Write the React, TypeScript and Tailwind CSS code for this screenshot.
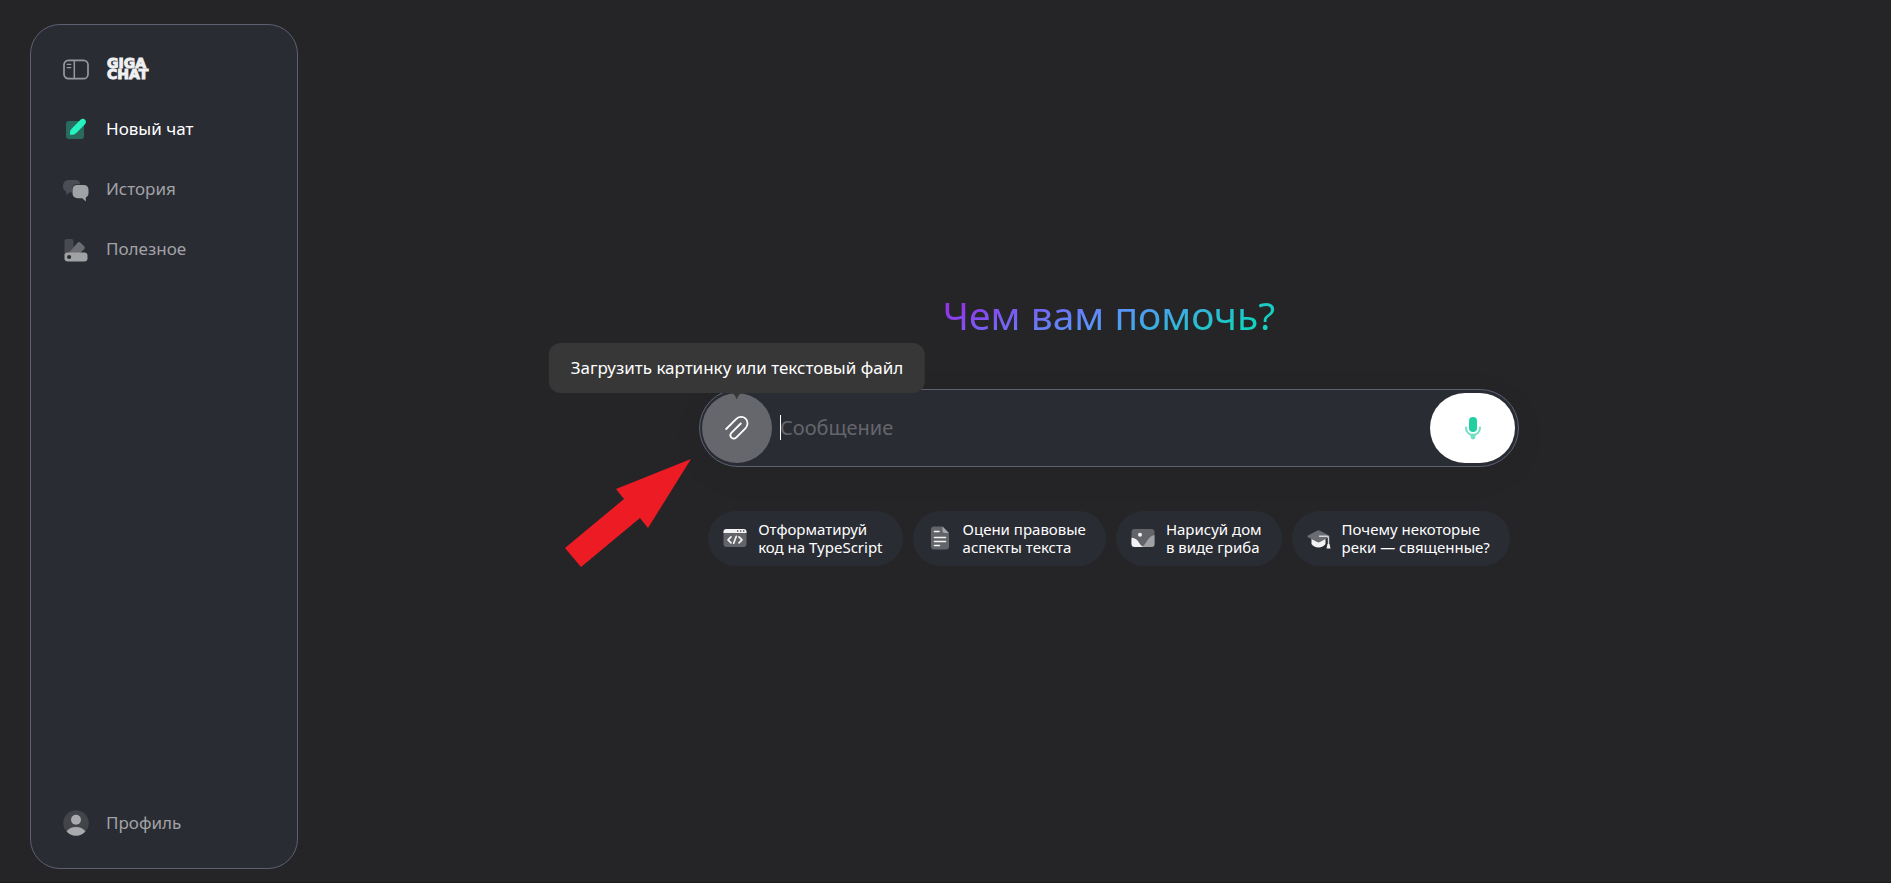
import type { ReactNode } from "react";

const PanelIcon = () => (
  <svg viewBox="0 0 26 26" className="h-[26px] w-[26px]" fill="none" aria-hidden="true">
    <rect x="1" y="4.3" width="24" height="18.4" rx="4.5" stroke="#97989c" strokeWidth="1.7" />
    <path d="M11.3 4.3v18.4" stroke="#97989c" strokeWidth="1.5" />
    <path d="M4.2 8.3h3.6M4.2 11.6h3.6" stroke="#97989c" strokeWidth="1.3" strokeLinecap="round" />
  </svg>
);

const NewChatIcon = () => (
  <svg viewBox="0 0 26 26" className="h-[26px] w-[26px]" aria-hidden="true">
    <rect x="3" y="5" width="18" height="18" rx="3" fill="#2a6b5f" />
    <path
      d="M7 18.8c-.3-2.4.2-4.6 1.8-6.2l8.4-8.5c1.6-1.6 3.5-1.6 4.8-.4 1.3 1.3 1.3 3.2-.3 4.8l-8.4 8.4c-1.5 1.5-3.5 2.1-6.3 1.9z"
      fill="#26f4c0"
    />
  </svg>
);

const HistoryIcon = () => (
  <svg viewBox="0 0 26 26" className="h-[26px] w-[26px]" aria-hidden="true">
    <path
      d="M6 4h6c3.5 0 5.5 2 5.5 5.5V12c0 3-1.5 4.5-5 4.5h-6l-3.2 2.7v-3.4C1.2 14.5 0 13 0 10.5 0 6.5 2 4 6 4z"
      fill="#4b4d54"
    />
    <path
      d="M14.5 8.2h6c3.5 0 5.5 2 5.5 5.4V17c0 2.3-1 4-2.8 4.7v4.2l-3.9-3.3h-4.8c-3.5 0-5.5-2-5.5-5.5v-3.5c0-3.4 2-5.4 5.5-5.4z"
      fill="#2a2c34"
    />
    <path
      d="M14.5 9h6c3.3 0 5 1.8 5 5v3c0 2.2-1 3.6-2.7 4.4v4.1l-3.6-3.3h-4.7c-3.3 0-5-1.9-5-5.2v-3c0-3.2 1.7-5 5-5z"
      fill="#a1a2a6"
    />
  </svg>
);

const UsefulIcon = () => (
  <svg viewBox="0 0 26 26" className="h-[26px] w-[26px]" aria-hidden="true">
    <rect x="1.5" y="3" width="9" height="18" rx="2.2" fill="#484a51" />
    <path d="M4 19 14.3 7c1-1.2 2.2-1.2 3.2-.3l3.5 3.4c1 1 1 2.1.1 3.1L13 21z" fill="#6c6d73" />
    <rect x="1.5" y="16.5" width="23" height="9" rx="3.2" fill="#a1a2a6" />
    <circle cx="6.1" cy="21" r="2.1" fill="#2a2c34" />
  </svg>
);

const ProfileIcon = () => (
  <svg viewBox="0 0 26 26" className="h-[26px] w-[26px]" aria-hidden="true">
    <circle cx="13" cy="13" r="12.8" fill="#42444a" />
    <circle cx="13" cy="9.7" r="5" fill="#a9aaae" />
    <path d="M3.6 21.2c2.2-2.8 5.3-4.3 9.4-4.3s7.2 1.5 9.4 4.3c-2.2 2.8-5.5 4.5-9.4 4.5s-7.2-1.7-9.4-4.5z" fill="#a9aaae" />
  </svg>
);

const ClipIcon = () => (
  <svg viewBox="0 0 24 24" className="h-6 w-6" fill="none" aria-hidden="true">
    <path
      d="M1.2 13 10.8 3.3C13.7.3 18 .3 20.6 2.7c2.7 2.6 2.5 6.8-.2 9.6l-9 9c-1.6 1.6-3.6 1.6-5 .3-1.4-1.4-1.3-3.4.2-5l9.2-9.1"
      stroke="#fff"
      strokeWidth="1.8"
      strokeLinecap="round"
      strokeLinejoin="round"
    />
  </svg>
);

const MicIcon = () => (
  <svg viewBox="0 0 24 24" className="h-6 w-6" fill="none" aria-hidden="true">
    <path d="M5 11.5c0 4.5 3 7.3 7 7.3s7-2.8 7-7.3" stroke="#6fdfc2" strokeWidth="2" strokeLinecap="round" />
    <path d="M9 18h6l-1 4.3c-.6 1.5-3.4 1.5-4 0z" fill="#6fdfc2" />
    <rect x="8" y="1" width="8" height="15" rx="4" fill="#21cfa0" />
  </svg>
);

const CodeIcon = () => (
  <svg viewBox="0 0 24 24" className="h-6 w-6 shrink-0" fill="none" aria-hidden="true">
    <rect x="0.5" y="3" width="23" height="18" rx="3" fill="#636469" />
    <path d="M.5 7V6c0-2 1-3 3-3h17c2 0 3 1 3 3v1z" fill="#f3f3f4" />
    <path d="M14 5h1.3M17 5h1.3M20 5h1.3" stroke="#4d4e54" strokeWidth="1.6" />
    <path d="m8 10.8-3 3 3 3M16 10.8l3 3-3 3M13.3 10.3l-2.6 7" stroke="#f3f3f4" strokeWidth="1.7" strokeLinecap="round" strokeLinejoin="round" />
  </svg>
);

const DocIcon = () => (
  <svg viewBox="0 0 24 24" className="h-6 w-6 shrink-0" fill="none" aria-hidden="true">
    <path d="M6 .5h8.5L21 7.5v13c0 2-1 3-3 3H6c-2 0-3-1-3-3v-17c0-2 1-3 3-3z" fill="#636469" />
    <path d="M14.5.5 21 7h-4c-1.7 0-2.5-.8-2.5-2.5z" fill="#a5a6aa" />
    <path d="M6.5 5.5H11M6.500 11.500h11M6.500 15.500h11M6.500 19.500h5" stroke="#f3f3f4" strokeWidth="1.6" strokeLinecap="round" />
  </svg>
);

const PictureIcon = () => (
  <svg viewBox="0 0 24 24" className="h-6 w-6 shrink-0" aria-hidden="true">
    <rect x="0.5" y="3" width="23" height="18" rx="3" fill="#636469" />
    <path d="M23.5 9v9c0 2-1 3-3 3H11c2-1.5 3.3-3.5 5-6 2-3.3 4.3-5.5 7.5-6z" fill="#a0a1a5" />
    <path d="M.5 11.7c4 .3 5.8 2 7.3 4.5 1 1.6 2 3.3 4.7 4.800h-9c-2 0-3-1-3-3z" fill="#f3f3f4" />
    <circle cx="9" cy="8.7" r="2" fill="#f3f3f4" />
  </svg>
);

const CapIcon = () => (
  <svg viewBox="0 0 24 24" className="h-6 w-6 shrink-0" fill="none" aria-hidden="true">
    <path d="M4.5 12v6c1.5 2.3 4 3.5 7 3.5s5.500-1.200 7-3.500v-6z" fill="#f3f3f4" />
    <path d="M10 4.8c1-.5 2-.5 3 0l9 4.700c.8.5.8 1.200 0 1.700l-9 4.900c-1 .5-2 .5-3 0l-9-4.900c-.8-.5-.8-1.200 0-1.700z" fill="#6b6c71" />
    <path d="M12 10.3h7.500c1.300 0 2 .7 2 2v6" stroke="#d5d5d8" strokeWidth="1.4" />
    <path d="M20.5 18h2l1 4.5h-4z" fill="#f3f3f4" />
  </svg>
);

const navItems = [
  { label: "Новый чат", icon: <NewChatIcon />, active: true },
  { label: "История", icon: <HistoryIcon />, active: false },
  { label: "Полезное", icon: <UsefulIcon />, active: false },
];

const suggestions = [
  { lines: ["Отформатируй", "код на TypeScript"], icon: <CodeIcon /> },
  { lines: ["Оцени правовые", "аспекты текста"], icon: <DocIcon /> },
  { lines: ["Нарисуй дом", "в виде гриба"], icon: <PictureIcon /> },
  { lines: ["Почему некоторые", "реки — священные?"], icon: <CapIcon /> },
];

const NavLink = ({
  label,
  icon,
  active = false,
}: {
  label: string;
  icon: ReactNode;
  active?: boolean;
}) => (
  <a
    href="#"
    className={`flex h-[60px] items-center gap-[17px] text-[17px] ${
      active ? "text-white" : "text-[#a1a2a6]"
    }`}
  >
    {icon}
    {label}
  </a>
);

const Sidebar = () => (
  <aside className="mx-[30px] mt-6 mb-[13px] flex w-[268px] shrink-0 flex-col rounded-[30px] border border-[#5d6073] bg-[#2a2c34] px-8 pt-[14px] pb-[15px]">
    <div className="flex h-[60px] items-center gap-[18px]">
      <button type="button" aria-label="Свернуть меню">
        <PanelIcon />
      </button>
      <a
        href="#"
        className="flex flex-col font-['DejaVu_Sans',sans-serif] text-[14px] leading-[11px] font-bold text-[#f0f0f1] [-webkit-text-stroke:1px_#f0f0f1]"
      >
        <span>GIGA</span>
        <span>CHAT</span>
      </a>
    </div>
    <nav className="flex flex-col">
      {navItems.map((item) => (
        <NavLink key={item.label} {...item} />
      ))}
    </nav>
    <div className="mt-auto">
      <NavLink label="Профиль" icon={<ProfileIcon />} />
    </div>
  </aside>
);

const AttachButton = () => (
  <div className="relative shrink-0">
    <button
      type="button"
      aria-label="Прикрепить файл"
      aria-describedby="attach-tip"
      className="flex h-[70px] w-[70px] items-center justify-center rounded-full bg-[#66676c]"
    >
      <ClipIcon />
    </button>
    <div
      id="attach-tip"
      role="tooltip"
      className="absolute bottom-full left-1/2 flex h-[50px] -translate-x-1/2 items-center rounded-xl bg-[#373737] px-[22px] text-[17px] whitespace-nowrap text-white"
    >
      Загрузить картинку или текстовый файл
      <svg viewBox="0 0 14 7" className="absolute top-full left-1/2 h-[7px] w-[14px] -translate-x-1/2" aria-hidden="true">
        <path d="M0 0h14C10 .5 8.8 2 7 6.5 5.2 2 4 .5 0 0z" fill="#373737" />
      </svg>
    </div>
  </div>
);

const MessageBox = () => (
  <form className="flex w-[820px] items-center rounded-full border border-[#5d6073] bg-[#2a2c34] py-[3px] pr-[3px] pl-[2px] shadow-[0_8px_48px_rgba(0,0,0,0.03)]">
    <AttachButton />
    <div className="relative ml-2 flex flex-1 items-center">
      <span className="absolute left-0 h-[25px] w-px bg-white" />
      <input
        type="text"
        aria-label="Сообщение"
        placeholder="Сообщение"
        className="w-full bg-transparent text-xl text-white outline-none placeholder:text-[#65666b]"
      />
    </div>
    <button
      type="button"
      aria-label="Голосовой ввод"
      className="flex h-[70px] w-[85px] shrink-0 items-center justify-center rounded-full bg-white"
    >
      <MicIcon />
    </button>
  </form>
);

// red pointer drawn over the page, aimed at the attach button
const Pointer = () => (
  <svg viewBox="0 0 126 108" className="pointer-events-none absolute top-[70px] right-full mr-2 h-[108px] w-[126px]" aria-hidden="true">
    <path d="M126 0 51 30l8 10L0 89l16 19 59-49 8 10z" fill="#ed1c24" />
  </svg>
);

const App = () => {
  return (
    <div className="flex min-h-screen border-b border-[#1a1a1b] bg-[#252527] font-['Noto_Sans',sans-serif]">
      <Sidebar />
      <main className="flex flex-1 flex-col items-center justify-center pr-px pb-[26px]">
        <h1 className="bg-linear-[155deg] from-[#9333ea] from-10% via-[#5b93fa] via-50% to-[#14d0c0] to-85% bg-clip-text text-[39px] leading-[48px] font-normal text-transparent">
          Чем вам помочь?
        </h1>
        <div className="relative mt-[50px]">
          <MessageBox />
          <Pointer />
        </div>
        <div className="mt-11 flex gap-[10px]">
          {suggestions.map(({ lines, icon }) => (
            <button
              key={lines[0]}
              type="button"
              className="flex h-[55px] items-center gap-[11px] rounded-full bg-[#2a2c34] pr-5 pl-[15px] text-left text-[15px] leading-[18px] text-white"
            >
              {icon}
              <span>
                {lines[0]}
                <br />
                {lines[1]}
              </span>
            </button>
          ))}
        </div>
      </main>
    </div>
  );
};

export default App;
